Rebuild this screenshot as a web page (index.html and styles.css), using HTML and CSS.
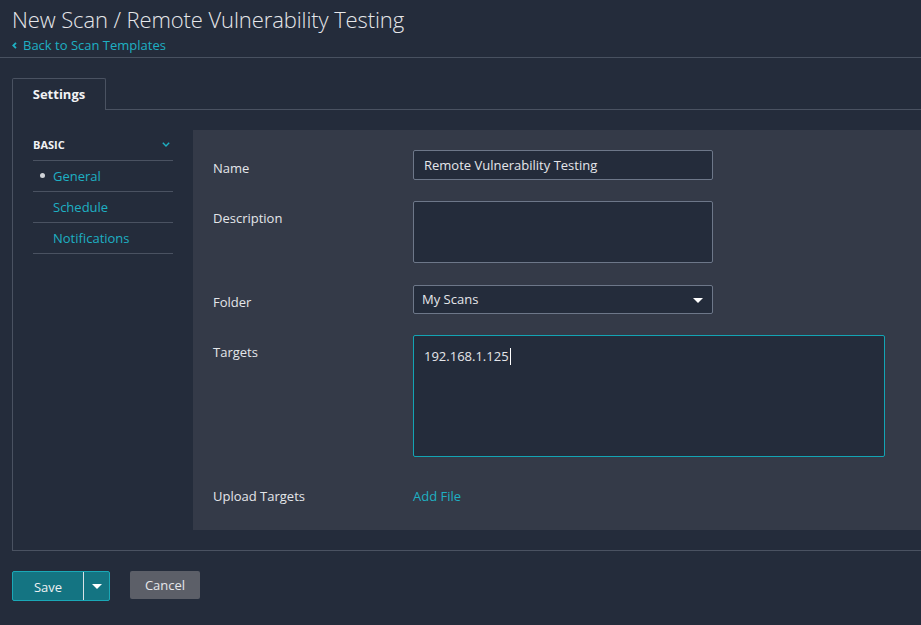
FILE: index.html
```html
<!DOCTYPE html>
<html lang="en">
<head>
<meta charset="utf-8">
<title>New Scan / Remote Vulnerability Testing</title>
<link rel="stylesheet" href="styles.css">
</head>
<body>
<header class="page-header">
  <h1 class="page-title">New Scan / Remote Vulnerability Testing</h1>
  <a class="back-link" href="#"><svg class="back-icon" width="5" height="7" viewBox="0 0 5 7"><path d="M4 0.8 L1.3 3.5 L4 6.2" fill="none" stroke="currentColor" stroke-width="1.8"/></svg>Back to Scan Templates</a>
</header>

<main class="content">
  <div class="tabs">
    <div class="tab active">Settings</div>
    <div class="tab-fill"></div>
  </div>
  <section class="panel">
    <nav class="sidebar">
      <div class="side-head">
        <span>BASIC</span>
        <svg class="chev" width="8" height="5" viewBox="0 0 8 5"><path d="M0.8 0.8 L4 4 L7.2 0.8" fill="none" stroke="currentColor" stroke-width="1.4"/></svg>
      </div>
      <a class="side-item current" href="#"><span class="bullet"></span>General</a>
      <a class="side-item" href="#">Schedule</a>
      <a class="side-item" href="#">Notifications</a>
    </nav>
    <div class="form">
      <div class="row r-name">
        <label class="label">Name</label>
        <div class="field input w300">Remote Vulnerability Testing</div>
      </div>
      <div class="row r-desc">
        <label class="label">Description</label>
        <div class="field textarea w300"></div>
      </div>
      <div class="row r-folder">
        <label class="label">Folder</label>
        <div class="field select w300">My Scans<span class="caret"></span></div>
      </div>
      <div class="row r-targets">
        <label class="label">Targets</label>
        <div class="field targets">192.168.1.125<span class="cursor"></span></div>
      </div>
      <div class="row upload">
        <label class="label">Upload Targets</label>
        <a class="add-file" href="#">Add File</a>
      </div>
    </div>
  </section>
  <div class="actions">
    <div class="btn-save">
      <span class="save-main">Save</span>
      <span class="save-drop"><span class="caret white"></span></span>
    </div>
    <button class="btn-cancel">Cancel</button>
  </div>
</main>
</body>
</html>
```

FILE: styles.css
```css
* { box-sizing: border-box; }
html, body { margin: 0; padding: 0; }
body {
  background: #242c3b;
  color: #e4e6ea;
  font-family: "Open Sans", "Liberation Sans", sans-serif;
  font-size: 13px;
  width: 921px;
  height: 625px;
  overflow: hidden;
}
a { text-decoration: none; }

.page-header {
  padding: 4px 12px 4px 12px;
  border-bottom: 1px solid #485160;
  height: 58px;
}
.page-title {
  margin: 0;
  font-size: 22px;
  font-weight: 300;
  line-height: 30px;
  color: #e6e7ea;
  letter-spacing: -0.1px;
}
.back-link {
  display: flex;
  align-items: center;
  gap: 6px;
  color: #1eb0c3;
  font-size: 13px;
  line-height: 18px;
  margin-top: 2px;
}
.back-icon { display: block; margin-top: 1px; }

.content {
  padding: 20px 0 0 12px;
}
.tabs {
  display: flex;
  height: 32px;
}
.tab {
  width: 94px;
  height: 32px;
  border: 1px solid #4a5261;
  border-bottom: none;
  border-radius: 2px 2px 0 0;
  font-weight: 700;
  font-size: 13px;
  color: #f2f3f5;
  display: flex;
  align-items: center;
  justify-content: center;
  padding-bottom: 2px;
}
.tab-fill {
  flex: 1;
  border-bottom: 1px solid #4a5261;
}
.panel {
  display: flex;
  border-left: 1px solid #4a5261;
  border-bottom: 1px solid #4a5261;
  padding: 20px 0 20px 20px;
  gap: 20px;
}
.sidebar {
  width: 140px;
  flex: none;
}
.side-head {
  display: flex;
  justify-content: space-between;
  align-items: center;
  height: 31px;
  padding: 0 3px 2px 0;
  border-bottom: 1px solid #4a5261;
  font-weight: 700;
  font-size: 11px;
  color: #f2f3f5;
}
.chev { color: #1eb0c3; display: block; }
.side-item {
  display: flex;
  align-items: center;
  height: 31px;
  padding-left: 20px;
  border-bottom: 1px solid #4a5261;
  color: #1eb0c3;
  font-size: 13px;
  position: relative;
}
.bullet {
  position: absolute;
  left: 7px;
  top: 12px;
  width: 5px;
  height: 5px;
  border-radius: 50%;
  background: #cfd2d7;
}

.form {
  flex: 1;
  background: #343a48;
  padding: 20px 20px 25px 20px;
  height: 400px;
}
.row {
  display: flex;
  align-items: flex-start;
  margin-bottom: 21px;
}
.r-desc { margin-bottom: 22px; }
.r-folder { margin-bottom: 21px; }
.label {
  width: 200px;
  flex: none;
  padding-top: 8px;
  line-height: 18px;
  color: #e4e6ea;
}
.r-name .label { padding-top: 9px; }
.field {
  background: #242c3b;
  border: 1px solid #6d7789;
  border-radius: 2px;
  color: #e4e6ea;
  font-size: 13px;
}
.w300 { width: 300px; }
.input {
  height: 30px;
  line-height: 28px;
  padding-left: 10px;
}
.textarea { height: 62px; }
.select {
  height: 29px;
  line-height: 27px;
  padding-left: 8px;
  position: relative;
}
.caret {
  position: absolute;
  right: 9px;
  top: 12px;
  width: 0;
  height: 0;
  border-left: 5px solid transparent;
  border-right: 5px solid transparent;
  border-top: 5px solid #ffffff;
}
.targets {
  width: 472px;
  height: 122px;
  border-color: #13a4b4;
  padding: 10px 10px;
  line-height: 20px;
}
.cursor {
  display: inline-block;
  width: 1px;
  height: 17px;
  background: #ffffff;
  vertical-align: -4px;
  margin-left: 1px;
}
.row.upload { margin-bottom: 0; }
.upload .label { padding-top: 9px; }
.add-file {
  color: #1eb0c3;
  padding-top: 9px;
  line-height: 18px;
}

.actions {
  display: flex;
  align-items: flex-start;
  gap: 20px;
  margin-top: 20px;
}
.btn-save {
  display: flex;
  height: 30px;
  width: 98px;
  border: 1px solid #1aa8b7;
  border-radius: 2px;
  background: #147482;
  color: #eef0f2;
}
.save-main {
  width: 71px;
  display: flex;
  align-items: center;
  justify-content: center;
  border-right: 1px solid #d9e2e6;
  padding-top: 1px;
}
.save-drop {
  flex: 1;
  position: relative;
}
.caret.white { right: 7px; top: 12px; }
.btn-cancel {
  height: 28px;
  width: 70px;
  border: none;
  border-radius: 2px;
  background: #5c5f68;
  color: #e6e7ea;
  font-family: "Open Sans", "Liberation Sans", sans-serif;
  font-size: 13px;
  padding: 0;
}
```
